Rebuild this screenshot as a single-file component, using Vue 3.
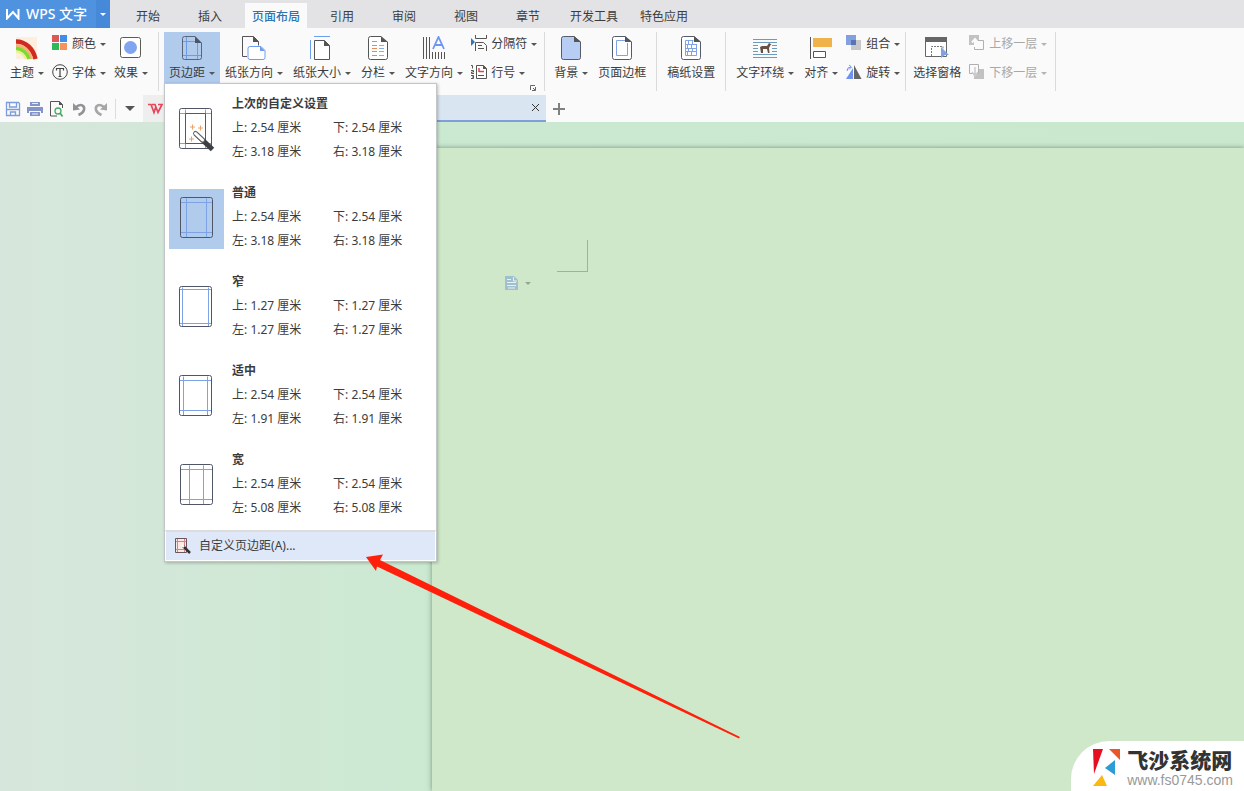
<script setup>
import { ref } from 'vue'

const tabs = ['开始', '插入', '页面布局', '引用', '审阅', '视图', '章节', '开发工具', '特色应用']
const activeTab = ref('页面布局')

const groups = [
  {
    id: 'theme',
    items: [
      { label: '主题', icon: 'theme', caret: true },
      {
        stack: [
          { label: '颜色', icon: 'colors', caret: true },
          { label: '字体', icon: 'font', caret: true },
        ],
      },
      { label: '效果', icon: 'effect', caret: true },
    ],
  },
  {
    id: 'setup',
    launcher: true,
    items: [
      { label: '页边距', icon: 'margins', caret: true, menu: true },
      { label: '纸张方向', icon: 'orientation', caret: true },
      { label: '纸张大小', icon: 'size', caret: true },
      { label: '分栏', icon: 'columns', caret: true },
      { label: '文字方向', icon: 'direction', caret: true },
      {
        stack: [
          { label: '分隔符', icon: 'break', caret: true },
          { label: '行号', icon: 'lines', caret: true },
        ],
      },
    ],
  },
  {
    id: 'background',
    items: [
      { label: '背景', icon: 'background', caret: true },
      { label: '页面边框', icon: 'border' },
    ],
  },
  { id: 'manuscript', items: [{ label: '稿纸设置', icon: 'manuscript' }] },
  {
    id: 'arrange',
    items: [
      { label: '文字环绕', icon: 'wrap', caret: true },
      { label: '对齐', icon: 'align', caret: true },
      {
        stack: [
          { label: '组合', icon: 'group', caret: true },
          { label: '旋转', icon: 'rotate', caret: true },
        ],
      },
    ],
  },
  {
    id: 'select',
    items: [
      { label: '选择窗格', icon: 'pane' },
      {
        stack: [
          { label: '上移一层', icon: 'forward', caret: true, disabled: true },
          { label: '下移一层', icon: 'backward', caret: true, disabled: true },
        ],
      },
    ],
  },
]

const presets = [
  { name: '上次的自定义设置', t: '2.54', b: '2.54', l: '3.18', r: '3.18', x: 10, lines: [16, 36, 13, 43], custom: true },
  { name: '普通', t: '2.54', b: '2.54', l: '3.18', r: '3.18', x: 11, lines: [17, 37, 13, 43] },
  { name: '窄', t: '1.27', b: '1.27', l: '1.27', r: '1.27', x: 10, lines: [13, 39, 11, 45] },
  { name: '适中', t: '2.54', b: '2.54', l: '1.91', r: '1.91', x: 10, lines: [14, 38, 13, 43] },
  { name: '宽', t: '2.54', b: '2.54', l: '5.08', r: '5.08', x: 11, lines: [20, 34, 13, 43] },
]
const selected = ref('普通')

const quick = [
  { name: '保存', icon: 'save' },
  { name: '打印', icon: 'print' },
  { name: '打印预览', icon: 'preview' },
  { name: '撤销', icon: 'undo' },
  { name: '恢复', icon: 'redo' },
]
</script>

<template>
  <div class="app">
    <svg class="sprite" aria-hidden="true">
      <symbol id="theme" viewBox="0 0 24 24">
        <path d="M1 1h21v22H1z" fill="#fdeedd" />
        <path d="M1 5.500C11 5.500 18 13 20.500 23" fill="none" stroke="#d02a20" stroke-width="4.500" />
        <path d="M1 9.500C9 9.500 14 15 17 23" fill="none" stroke="#f6b27a" stroke-width="3" />
        <path d="M1 12.500C7 12.500 12 17 14 23" fill="none" stroke="#7cdc2c" stroke-width="3.500" />
        <path d="M1 15.500C5 15.500 9 19 11 23" fill="none" stroke="#e8f28a" stroke-width="2" />
      </symbol>
      <symbol id="colors" viewBox="0 0 16 16">
        <path d="M0 0h7v7H0z" fill="#dc5a55" /><path d="M8 0h7v7H8z" fill="#3f8fe8" />
        <path d="M0 8h7v7H0z" fill="#2eb85c" /><path d="M8 8h7v7H8z" fill="#f5935a" />
      </symbol>
      <symbol id="font" viewBox="0 0 16 16">
        <circle cx="8" cy="8" r="7.300" fill="none" stroke="#444" />
        <path d="M4.500 6.500V4.500h7v2M8 4.500v8M6.500 12.500h3" fill="none" stroke="#444" stroke-width="1.200" />
      </symbol>
      <symbol id="effect" viewBox="0 0 24 24">
        <rect x="1.500" y="1.500" width="20" height="20" rx="2" fill="#fff" stroke="#5b5b52" />
        <circle cx="11.500" cy="11.500" r="6.500" fill="#7fa6ee" />
      </symbol>
      <symbol id="margins" viewBox="0 0 24 24">
        <path d="M15 .5H4.500a2 2 0 0 0-2 2v19a2 2 0 0 0 2 2h15a2 2 0 0 0 2-2V7" fill="none" stroke="#5a6577" />
        <path d="M15 0l7 7h-7z" fill="#4b5566" />
        <path d="M6.500 1v22M17.500 7v16M3 5.500h12M3 19.500h18" fill="none" stroke="#6f9be6" />
      </symbol>
      <symbol id="orientation" viewBox="0 0 24 24">
        <path d="M5 20.500H.5V.5h11l5 5v4" fill="none" stroke="#555" /><path d="M11 0l6 6h-6z" fill="#555" />
        <path d="M6 12.500q0-2 2-2h11l4 4v7q0 2-2 2H8q-2 0-2-2z" fill="#fff" stroke="#6e9cf0" /><path d="M18 10l5 5h-5z" fill="#6e9cf0" />
      </symbol>
      <symbol id="size" viewBox="0 0 24 24">
        <path d="M4 .5h16M.5 4v19" stroke="#6e9cf0" />
        <path d="M4.500 4.500h10l5 5v14h-15z" fill="#fff" stroke="#555" /><path d="M14 4l6 6h-6z" fill="#555" />
      </symbol>
      <symbol id="columns" viewBox="0 0 24 24">
        <path d="M15 .5H4.500a2 2 0 0 0-2 2v19a2 2 0 0 0 2 2h15a2 2 0 0 0 2-2V6" fill="#fff" stroke="#555" /><path d="M15 0l7 6h-7z" fill="#555" />
        <path d="M6 5.500h5M6 9.500h5M6 12.500h5M6 15.500h5M6 19.500h5" stroke="#e58a55" />
        <path d="M13 9.500h5M13 12.500h5M13 15.500h5M13 19.500h5" stroke="#8ab0dd" />
      </symbol>
      <symbol id="direction" viewBox="0 0 24 24">
        <path d="M1.500 1v22M4.500 1v22M7.500 1v22M10.500 16v7M13.500 16v7M16.500 16v7M19.500 16v7M22.500 16v7" stroke="#555" />
        <path d="M11 13L16.500 1L22 13M13 9h7" fill="none" stroke="#6e96f0" stroke-width="1.800" />
      </symbol>
      <symbol id="break" viewBox="0 0 16 16">
        <path d="M0 3l4 4-4 4z" fill="#3477b5" /><path d="M4.500 0v3.500h11V0" fill="none" stroke="#555" />
        <path d="M4.500 16V7.500h8l3 3V16M7 10.500h4M7 13.500h6" fill="none" stroke="#555" />
      </symbol>
      <symbol id="lines" viewBox="0 0 16 16">
        <path d="M0 1.500h1.500v3M0 6.500h2.500v1.500H.5v1.500h2.500M0 11.500h2.500v3H0M1 13h1.500" fill="none" stroke="#555" />
        <path d="M5.500 1.500h7l3 3v10h-10z" fill="#fff" stroke="#555" /><path d="M12 1l4 4h-4z" fill="#555" />
        <path d="M8 4v4M8 7.500h5" stroke="#d5474f" stroke-width="1.500" /><path d="M7 11.500h6" stroke="#555" />
      </symbol>
      <symbol id="background" viewBox="0 0 24 24">
        <path d="M15 .5H4.500a2 2 0 0 0-2 2v19a2 2 0 0 0 2 2h15a2 2 0 0 0 2-2V6z" fill="#b7cdf3" stroke="#555b68" /><path d="M15 0l7 6h-7z" fill="#555" />
      </symbol>
      <symbol id="border" viewBox="0 0 24 24">
        <path d="M15 .5H4.500a2 2 0 0 0-2 2v19a2 2 0 0 0 2 2h15a2 2 0 0 0 2-2V6z" fill="#fff" stroke="#555b68" />
        <path d="M15 4.500H6.500v15h11V7" fill="none" stroke="#7fa3e5" /><path d="M15 0l7 6h-7z" fill="#555" />
      </symbol>
      <symbol id="manuscript" viewBox="0 0 24 24">
        <path d="M15 .5H4.500a2 2 0 0 0-2 2v19a2 2 0 0 0 2 2h15a2 2 0 0 0 2-2V6z" fill="#fff" stroke="#555b68" /><path d="M15 0l7 6h-7z" fill="#555" />
        <path d="M14.500 4.500h-8v15h11V8M6 8.500h12M6 12.500h12M6 15.500h12M9.500 4v4M13.500 4v4M8.500 8v4M12.500 8v4M9.500 12v4M13.500 12v4M8.500 16v4M12.500 16v4" fill="none" stroke="#7fa3e5" />
      </symbol>
      <symbol id="wrap" viewBox="0 0 24 24">
        <path d="M0 3.500h24M0 6.500h24M0 9.500h5M19 9.500h5M0 12.500h5M19 12.500h5M0 15.500h5M19 15.500h5M0 18.500h24M0 21.500h24" stroke="#6a9cc0" />
        <path d="M7 11l1 6h2v-4h4l1 4h1.500l-.5-5 1.500-3 1-.5L16 7l-2 3H9z" fill="#665044" />
      </symbol>
      <symbol id="align" viewBox="0 0 24 24">
        <path d="M1.500 1v22" stroke="#555" /><path d="M4 2h19v9H4z" fill="#f0b24a" /><path d="M4.500 15.500h12v6h-12z" fill="#fff" stroke="#555" />
      </symbol>
      <symbol id="group" viewBox="0 0 16 16">
        <path d="M5 5h10v10H5z" fill="#c8c8ca" /><path d="M0 0h10v10H0z" fill="#84a1df" /><path d="M5 5h5v5H5z" fill="#5a75b5" />
      </symbol>
      <symbol id="rotate" viewBox="0 0 16 16">
        <path d="M7 4v11H0z" fill="#6e92f0" /><path d="M8 1l7.500 14H8z" fill="#666" /><path d="M1 7q0-4 4-4M3 1l2.500 2L3 5.500" fill="none" stroke="#6e92f0" />
      </symbol>
      <symbol id="pane" viewBox="0 0 24 24">
        <path d="M.5 3.500h21v17H.5z" fill="#fff" stroke="#666" /><path d="M0 1h22v5H0z" fill="#666" />
        <path d="M6.500 20v-9.500H18V13" fill="none" stroke="#777" stroke-dasharray="2 1" /><path d="M16 11l8 8h-4l-4 3z" fill="#84a1df" />
      </symbol>
      <symbol id="forward" viewBox="0 0 16 16">
        <path d="M0 0h10v10H0z" fill="#c2c2c2" /><path d="M5.500 5.500h9v9h-9z" fill="#fafafa" stroke="#b0b0b0" /><path d="M6 12V4M3 7.500l3-3.500 3 3.500" fill="none" stroke="#fafafa" stroke-width="2" />
      </symbol>
      <symbol id="backward" viewBox="0 0 16 16">
        <path d="M5 5h10v10H5z" fill="#c2c2c2" /><path d="M.5.5h9v9h-9z" fill="#fafafa" stroke="#b0b0b0" /><path d="M6 3v9M3 8l3 4 3-4" fill="none" stroke="#ccc" stroke-width="1.500" />
      </symbol>
      <symbol id="save" viewBox="0 0 16 16">
        <path d="M1.500 1.500h12l1 1v12h-13zM4.500 2v4h7V2M1.500 8.500h13M5.500 14v-3h5v3" fill="none" stroke="#7b9ddb" stroke-width="1.300" />
      </symbol>
      <symbol id="print" viewBox="0 0 16 16">
        <path d="M3 1h10v4H3zM0 6h16v6h-2v-2H2v2H0zM3 11h10v4H3z" fill="#8494c8" /><path d="M5 2.500h6M5 13h6" stroke="#e8ecf8" />
      </symbol>
      <symbol id="preview" viewBox="0 0 16 16">
        <path d="M8 15H1.500V.5h9l3 3V7" fill="none" stroke="#555" /><path d="M10 0l4 4h-4z" fill="#555" />
        <circle cx="9" cy="10" r="3" fill="none" stroke="#45a862" stroke-width="1.300" /><path d="M11 12l2.500 3.500" stroke="#45a862" stroke-width="1.700" />
      </symbol>
      <symbol id="undo" viewBox="0 0 16 16">
        <path d="M4.500 6.500C10 1.500 14 5 13 9q-1 3-5.500 5" fill="none" stroke="#909296" stroke-width="2.500" /><path d="M2 2v7.500l7-1z" fill="#909296" />
      </symbol>
      <symbol id="redo" viewBox="0 0 16 16">
        <path d="M11.500 6.500C6 1.500 2 5 3 9q1 3 5.500 5" fill="none" stroke="#a4a6a8" stroke-width="2.500" /><path d="M14 2v7.500l-7-1z" fill="#a4a6a8" />
      </symbol>
    </svg>

    <header class="titlebar">
      <button class="brand">
        <svg width="14" height="12" viewBox="0 0 14 12" aria-hidden="true"><path d="M1 1v9.500L7 4l5.500 6.500V1" fill="none" stroke="#fff" stroke-width="2" /></svg>
        <span>WPS 文字</span>
        <i class="brand-drop"><i class="caret" /></i>
      </button>
      <nav class="tabs">
        <button
          v-for="tab in tabs" :key="tab" class="tab"
          :class="{ active: tab === activeTab, wide: tab.length > 2 && tab !== activeTab }"
          @click="activeTab = tab"
        >{{ tab }}</button>
      </nav>
    </header>

    <section class="ribbon">
      <div v-for="g in groups" :key="g.id" class="group" :class="g.id">
        <template v-for="(item, i) in g.items" :key="i">
          <div v-if="item.stack" class="stack">
            <button v-for="s in item.stack" :key="s.label" class="small" :disabled="s.disabled">
              <svg width="16" height="16" aria-hidden="true"><use :href="'#' + s.icon" /></svg>
              <span class="label">{{ s.label }}<i v-if="s.caret" class="caret" /></span>
            </button>
          </div>
          <div v-else class="slot">
            <button class="big" :class="{ open: item.menu }">
              <svg width="24" height="24" aria-hidden="true"><use :href="'#' + item.icon" /></svg>
              <span class="label">{{ item.label }}<i v-if="item.caret" class="caret" /></span>
            </button>
            <div v-if="item.menu" class="menu">
              <button v-for="p in presets" :key="p.name" class="preset" @click="selected = p.name">
                <span class="thumb" :class="{ selected: p.name === selected }">
                  <svg width="55" height="60" viewBox="-.5 -.5 55 60" aria-hidden="true">
                    <path
                      :d="`M${p.lines[0]} 9V48M${p.lines[1]} 9V48M${p.x} ${p.lines[2]}h32M${p.x} ${p.lines[3]}h32`"
                      stroke="#7ea2e6"
                    />
                    <rect :x="p.x" y="8" width="32" height="40" rx="2" fill="none" stroke="#4f5668" />
                    <g v-if="p.custom">
                      <path d="M16 13h20v30H16z" fill="none" stroke="#b5303c" />
                      <path d="M23 24v5M20.500 26.500h5M31 25v5M28.500 27.500h5M22 36v5M19.500 38.500h5" stroke="#eba06a" />
                      <path d="M26 33l17 16" stroke="#3c3f44" stroke-width="5" />
                      <path d="M26 33l7 6.500" stroke="#666" stroke-width="5" stroke-linecap="round" />
                      <path d="M26 33l7 6.500" stroke="#fff" stroke-width="3" stroke-linecap="round" />
                    </g>
                  </svg>
                </span>
                <span class="details">
                  <strong>{{ p.name }}</strong>
                  <span>上: {{ p.t }} 厘米</span><span>下: {{ p.b }} 厘米</span>
                  <span>左: {{ p.l }} 厘米</span><span>右: {{ p.r }} 厘米</span>
                </span>
              </button>
              <button class="custom">
                <svg width="16" height="16" viewBox="0 0 16 16" aria-hidden="true">
                  <path d="M.5.5h11v14H.5z" fill="#fbe9e6" stroke="#6b5560" /><path d="M2.500 1v13M9.500 1v13M1 3.500h10M1 11.500h10" stroke="#d88088" />
                  <path d="M8 8l7 7" stroke="#333" stroke-width="2.500" /><path d="M7 7l2 2" stroke="#fff" stroke-width="2" />
                </svg>
                自定义页边距(A)...
              </button>
            </div>
          </div>
        </template>
        <button v-if="g.launcher" class="launcher" aria-label="页面设置">
          <svg width="6" height="6" viewBox="0 0 6 6"><path d="M.5 5V.5H5M5.500 2v3.500H2M3 3l2 2" fill="none" stroke="#666" /></svg>
        </button>
      </div>
    </section>

    <div class="docbar">
      <div class="quick">
        <button v-for="q in quick" :key="q.icon" :aria-label="q.name">
          <svg width="16" height="16" aria-hidden="true"><use :href="'#' + q.icon" /></svg>
        </button>
      </div>
      <button class="more" aria-label="自定义快速访问"><i class="caret" /></button>
      <button class="home" aria-label="首页">
        <svg width="16" height="12" viewBox="0 0 16 12"><path d="M1 1.500h3l3 8 2-6M5 1.500h3l3 8 4-8h-4" fill="none" stroke="#e8465a" stroke-width="1.700" /></svg>
      </button>
      <div class="doctab">
        <button aria-label="关闭">
          <svg width="9" height="9" viewBox="0 0 9 9"><path d="M1 1l7 7M8 1L1 8" stroke="#333" /></svg>
        </button>
      </div>
      <button class="add" aria-label="新建">
        <svg width="12" height="12" viewBox="0 0 12 12"><path d="M6 0v12M0 6h12" stroke="#808080" stroke-width="2" /></svg>
      </button>
    </div>

    <main class="workspace">
      <article class="sheet">
        <div class="corner" />
        <button class="paste" aria-label="粘贴选项">
          <svg width="14" height="16" viewBox="0 0 14 16">
            <path d="M0 1h9l4 4v10H0z" fill="#a0bfd0" /><path d="M2 4.500h4M2 7.500h9M2 10.500h9M3 13h7M8.500 2v4H12" fill="none" stroke="#e6f3ea" />
          </svg>
          <i class="caret" />
        </button>
      </article>
    </main>

    <svg class="pointer" width="376" height="186" viewBox="0 0 376 186" aria-hidden="true">
      <path d="M1 4L18 1.500L15 7L375 184L374 185.500L12 13.500L11 18z" fill="#ff200c" />
    </svg>

    <a class="watermark" href="#">
      <svg width="30" height="40" viewBox="0 0 30 40" aria-hidden="true">
        <path d="M1 1h10L2 26z" fill="#e60f20" /><path d="M17 1h11v11z" fill="#e8562a" />
        <path d="M23 12v15l-10-7z" fill="#2b9cd6" /><path d="M10 27l5 11H1z" fill="#fbb813" />
      </svg>
      <span><b>飞沙系统网</b><small>www.fs0745.com</small></span>
    </a>
  </div>
</template>

<style>
body { margin: 0; }
</style>

<style scoped>
.app {
  position: relative;
  display: flex;
  flex-direction: column;
  min-height: 100vh;
  overflow: hidden;
  font: 12px/16px 'Noto Sans', 'Noto Sans CJK SC', sans-serif;
  color: #3c3c3c;
  background: #fafafa;
}
.sprite { position: absolute; width: 0; height: 0; }
button { padding: 0; border: 0; background: none; font: inherit; color: inherit; white-space: nowrap; }
svg { display: block; flex: none; }
.caret { flex: none; width: 0; border: 3px solid transparent; border-top-color: #555; border-bottom: 0; }

.titlebar { display: flex; height: 28px; background: #e3e3e5; }
.brand {
  display: flex;
  align-items: center;
  flex: none;
  width: 110px;
  gap: 6px;
  padding-left: 6px;
  background: #4f92e0;
  color: #fff;
  font-size: 14px;
  font-weight: 500;
}
.brand-drop { display: flex; align-items: center; justify-content: center; align-self: stretch; width: 14px; margin-left: auto; background: #4689d8; }
.brand .caret { border-top-color: #fff; }
.tabs { display: flex; margin-left: 7px; }
.tab { width: 62px; padding-top: 6px; }
.tab.wide { width: 70px; }
.tab.active { margin: 3px 4px 0; padding-top: 3px; background: #fafafa; color: #2a74b5; font-weight: 500; }

.ribbon { display: flex; height: 59px; padding: 4px 0; }
.group { position: relative; display: flex; flex: none; padding: 0 5px 0 4px; border-right: 1px solid #dadada; }
.group.theme { gap: 8px; padding: 0 10px; }
.group.setup { padding: 0 7px 0 5px; }
.group.arrange, .group.manuscript { padding: 0 5px; }
.group.select { padding: 0 8px 0 2px; }
.slot { position: relative; align-self: flex-start; }
.big { display: flex; flex-direction: column; align-items: center; gap: 3px; padding: 4px 5px 2px; }
.big.open { background: #b1cbec; }
.theme .big { padding: 4px 0 2px; }
.label { display: flex; align-items: center; gap: 4px; padding-top: 2px; }
.stack { display: flex; flex-direction: column; gap: 7px; padding-left: 3px; }
.theme .stack { padding-left: 0; }
.small { display: flex; align-items: center; gap: 4px; height: 22px; }
.small:disabled { color: #a8a8a8; }
.small:disabled .caret { border-top-color: #b4b4b4; }
.launcher { position: absolute; right: 8px; bottom: 0; }

.menu {
  position: absolute;
  z-index: 2;
  top: 100%;
  left: 0;
  width: 271px;
  border: 1px solid #c2c6c6;
  background: #fff;
  box-shadow: 1px 1px 3px rgba(0, 0, 0, 0.25);
}
.preset { display: flex; width: 100%; height: 89px; padding: 8px 4px 0; text-align: left; }
.thumb { height: 60px; margin-top: 8px; }
.thumb.selected { background: #b1cbec; }
.details { display: grid; grid-template-columns: 101px auto; grid-auto-rows: 24px; margin-left: 8px; line-height: 24px; }
.details strong { grid-column: 1 / -1; }
.custom {
  display: flex;
  align-items: center;
  gap: 8px;
  width: 100%;
  height: 31px;
  margin-top: 1px;
  padding-left: 9px;
  border: 1px solid #fff;
  border-top: 2px solid #dcdcdc;
  background: #dfe8f8;
}

.docbar { display: flex; height: 27px; }
.quick { display: flex; align-items: center; gap: 6px; padding: 0 6px 0 5px; }
.more { display: flex; align-items: center; justify-content: center; align-self: center; width: 28px; height: 20px; border-left: 1px solid #ddd; }
.more .caret { border-width: 5px 5px 0; }
.home { width: 90px; padding-left: 4px; background: #eee; }
.doctab { display: flex; align-items: center; justify-content: flex-end; width: 313px; padding-right: 6px; box-sizing: border-box; border-bottom: 2px solid #7f9fdb; background: #dae5f2; }
.add { padding: 0 7px; }

.workspace { display: flex; flex: 1; padding: 26px 0 0 432px; background: linear-gradient(90deg, #d7e6dc 0, #cbe9d1 432px, #cae8cd 100%); }
.sheet { flex: 1; padding: 92px 0 0 73px; background: #cfe8ca; box-shadow: 0 0 5px rgba(70, 100, 80, 0.65); }
.corner { width: 30px; height: 31px; margin-left: 52px; border: solid #a3b0a0; border-width: 0 1px 1px 0; }
.paste { display: flex; align-items: center; gap: 6px; margin-top: 3px; }
.paste .caret { border-top-color: #92a894; }

.pointer { position: absolute; top: 553px; left: 365px; z-index: 3; }
.watermark {
  position: absolute;
  right: 0;
  bottom: 0;
  display: flex;
  gap: 5px;
  padding: 7px 11px 3px 21px;
  border-radius: 38px 0 0 0;
  background: #fff;
  color: #333;
  text-decoration: none;
}
.watermark b { display: block; font-size: 21px; line-height: 24px; font-weight: 900; }
.watermark small { display: block; font: 14px/16px 'Liberation Sans', sans-serif; color: #999; }
</style>
